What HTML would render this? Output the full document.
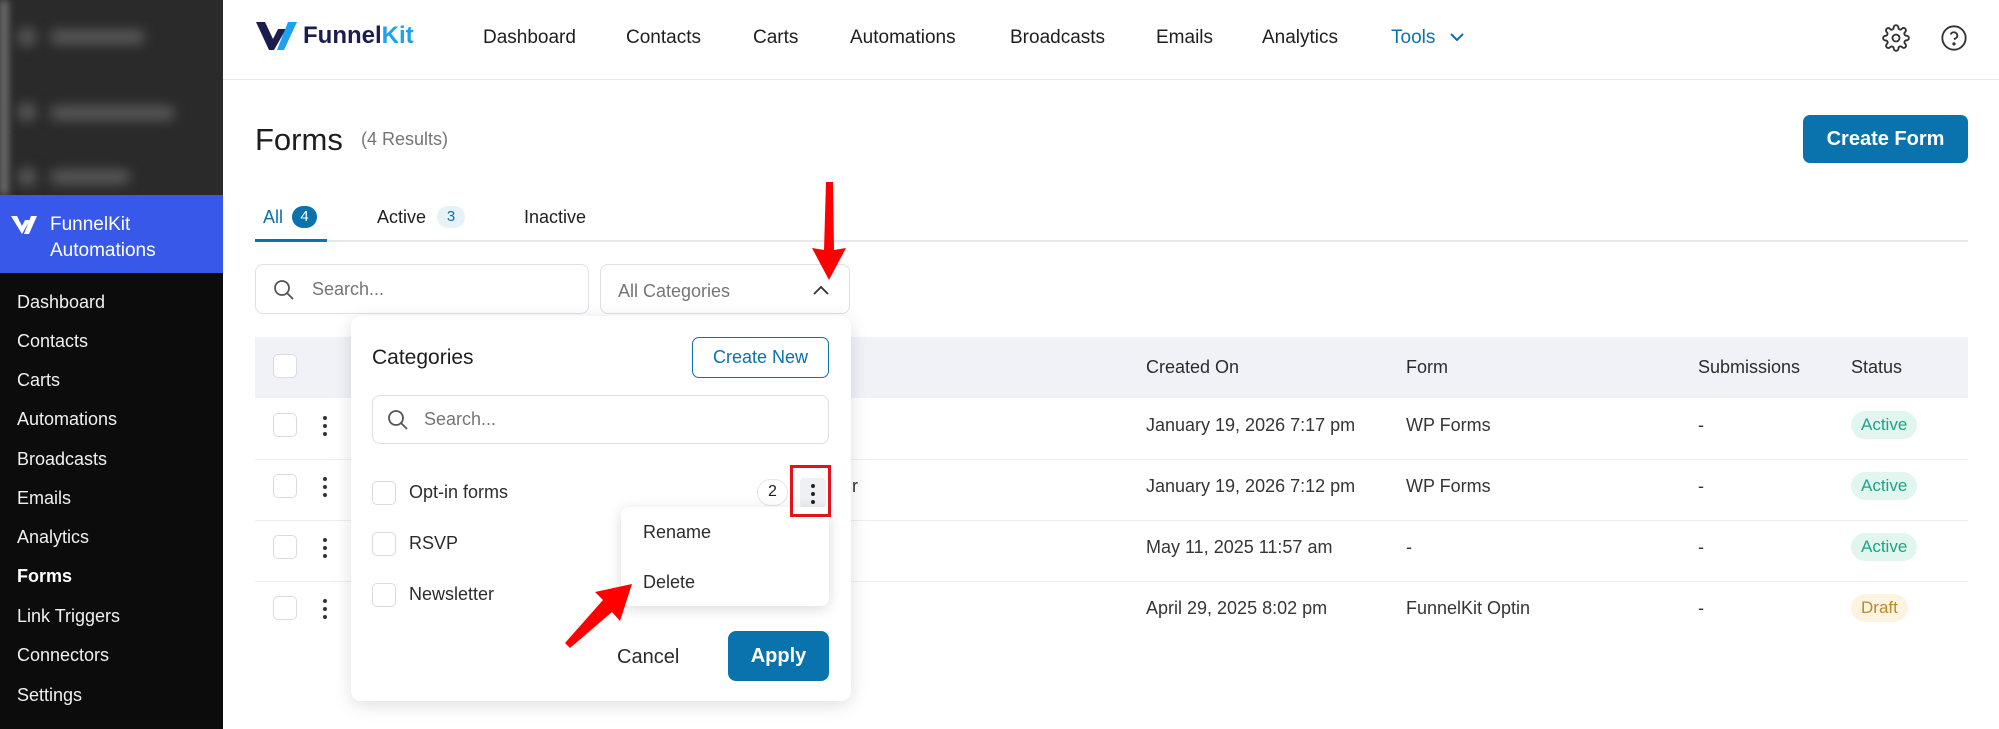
<!DOCTYPE html>
<html><head><meta charset="utf-8"><style>
*{box-sizing:border-box;margin:0;padding:0}
body{width:1999px;height:729px;overflow:hidden;background:#fff;font-family:"Liberation Sans",sans-serif;color:#1e1e1e;position:relative}
.a{position:absolute;white-space:nowrap}
#side{position:absolute;left:0;top:0;width:223px;height:729px;background:#1d2327}
.blur{position:absolute;background:#5a5a5a;filter:blur(6px);border-radius:8px}
.sm{position:absolute;left:17px;font-size:18px;color:#f0f0f1}
.nav{font-size:19px;color:#1e1e1e;top:27px}
.th{font-size:18px;color:#2c2c2c;top:357px}
.td{font-size:18px;color:#353535}
.cb{position:absolute;width:24px;height:24px;border:1.5px solid #d8dbe6;border-radius:5px;background:#fff}
.keb{position:absolute;width:4px;height:20px}
.keb i{display:block;width:4px;height:4px;border-radius:2px;background:#333;margin-bottom:4px}
.badge{position:absolute;height:28px;border-radius:14px;font-size:17px;line-height:28px;padding:0 10px}
.act{background:#e2f6f0;color:#1ea386}
.row{position:absolute;left:255px;width:1713px;height:1px;background:#eceef4}
</style></head><body>
<div id="side">
 <div style="position:absolute;left:0;top:0;width:223px;height:195px;background:#2a2a2a;overflow:hidden">
  <div style="position:absolute;left:0;top:0;width:8px;height:195px;background:#777;filter:blur(4px)"></div>
  <div class="blur" style="left:18px;top:28px;width:18px;height:18px"></div>
  <div class="blur" style="left:50px;top:30px;width:95px;height:14px"></div>
  <div class="blur" style="left:18px;top:103px;width:18px;height:18px"></div>
  <div class="blur" style="left:50px;top:106px;width:125px;height:14px"></div>
  <div class="blur" style="left:18px;top:168px;width:18px;height:18px"></div>
  <div class="blur" style="left:50px;top:170px;width:80px;height:14px"></div>
 </div>
 <div style="position:absolute;left:0;top:195px;width:223px;height:78px;background:#3858e9"></div>
 <svg class="a" style="left:10px;top:214px" width="30" height="20" viewBox="0 0 30 20"><path d="M1 2h6l5 10 3-6h5l-8 14z" fill="#fff"/><path d="M21 2h6l-8 18h-5z" fill="#fff"/></svg>
 <div class="a" style="left:50px;top:212px;font-size:19px;color:#fff;line-height:26px">FunnelKit<br>Automations</div>
 <div style="position:absolute;left:0;top:273px;width:223px;height:456px;background:#0c0c0c"></div>
 <div class="sm" style="top:292px">Dashboard</div>
 <div class="sm" style="top:331px">Contacts</div>
 <div class="sm" style="top:370px">Carts</div>
 <div class="sm" style="top:409px">Automations</div>
 <div class="sm" style="top:449px">Broadcasts</div>
 <div class="sm" style="top:488px">Emails</div>
 <div class="sm" style="top:527px">Analytics</div>
 <div class="sm" style="top:566px;font-weight:bold;color:#fff">Forms</div>
 <div class="sm" style="top:606px">Link Triggers</div>
 <div class="sm" style="top:645px">Connectors</div>
 <div class="sm" style="top:685px">Settings</div>
</div>
<div class="a" style="left:223px;top:79px;width:1776px;height:1px;background:#e6e8ee"></div>
<svg class="a" style="left:256px;top:22px" width="44" height="30" viewBox="0 0 44 30"><path d="M0 0h9l8 17 5-10h8L18 28h-5z" fill="#1b1d4e"/><path d="M32 0h9L28 28h-7z" fill="#1ba3f0"/></svg>
<div class="a" style="left:303px;top:22px;font-size:24px;font-weight:bold;color:#1b1d4e">Funnel<span style="color:#1ba3f0">Kit</span></div>
<div class="a nav" style="left:483px">Dashboard</div>
<div class="a nav" style="left:626px">Contacts</div>
<div class="a nav" style="left:753px">Carts</div>
<div class="a nav" style="left:850px">Automations</div>
<div class="a nav" style="left:1010px">Broadcasts</div>
<div class="a nav" style="left:1156px">Emails</div>
<div class="a nav" style="left:1262px">Analytics</div>
<div class="a nav" style="left:1391px;color:#0a72ad">Tools</div>
<svg class="a" style="left:1450px;top:32px" width="14" height="10" viewBox="0 0 14 10"><path d="M1 2l6 6 6-6" stroke="#0a72ad" stroke-width="2" fill="none"/></svg>
<svg class="a" style="left:1882px;top:24px" width="28" height="28" viewBox="0 0 24 24" fill="none" stroke="#333" stroke-width="1.6"><circle cx="12" cy="12" r="3"/><path d="M19.4 15a1.7 1.7 0 0 0 .3 1.8l.1.1a2 2 0 1 1-2.8 2.8l-.1-.1a1.7 1.7 0 0 0-1.8-.3 1.7 1.7 0 0 0-1 1.5V21a2 2 0 1 1-4 0v-.1a1.7 1.7 0 0 0-1.1-1.5 1.7 1.7 0 0 0-1.8.3l-.1.1a2 2 0 1 1-2.8-2.8l.1-.1a1.7 1.7 0 0 0 .3-1.8 1.7 1.7 0 0 0-1.5-1H3a2 2 0 1 1 0-4h.1a1.7 1.7 0 0 0 1.5-1.1 1.7 1.7 0 0 0-.3-1.8l-.1-.1a2 2 0 1 1 2.8-2.8l.1.1a1.7 1.7 0 0 0 1.8.3H9a1.7 1.7 0 0 0 1-1.5V3a2 2 0 1 1 4 0v.1a1.7 1.7 0 0 0 1 1.5 1.7 1.7 0 0 0 1.8-.3l.1-.1a2 2 0 1 1 2.8 2.8l-.1.1a1.7 1.7 0 0 0-.3 1.8V9a1.7 1.7 0 0 0 1.5 1H21a2 2 0 1 1 0 4h-.1a1.7 1.7 0 0 0-1.5 1z"/></svg>
<svg class="a" style="left:1940px;top:24px" width="28" height="28" viewBox="0 0 24 24" fill="none" stroke="#333" stroke-width="1.6"><circle cx="12" cy="12" r="10"/><path d="M9.1 9a3 3 0 0 1 5.8 1c0 2-3 3-3 3"/><circle cx="12" cy="17" r=".6" fill="#333"/></svg>
<div class="a" style="left:255px;top:122px;font-size:31px;color:#1e1e1e">Forms</div>
<div class="a" style="left:361px;top:129px;font-size:18px;color:#757575">(4 Results)</div>
<div class="a" style="left:1803px;top:115px;width:165px;height:48px;background:#0a72ad;border-radius:7px;color:#fff;font-size:20px;font-weight:bold;text-align:center;line-height:48px">Create Form</div>
<div class="a" style="left:263px;top:207px;font-size:18px;color:#0a72ad">All</div>
<div class="a" style="left:292px;top:206px;width:25px;height:22px;border-radius:11px;background:#0a72ad;color:#fff;font-size:15px;text-align:center;line-height:22px">4</div>
<div class="a" style="left:377px;top:207px;font-size:18px;color:#1e1e1e">Active</div>
<div class="a" style="left:437px;top:206px;width:28px;height:22px;border-radius:11px;background:#e6f1f8;color:#0a72ad;font-size:15px;text-align:center;line-height:22px">3</div>
<div class="a" style="left:524px;top:207px;font-size:18px;color:#1e1e1e">Inactive</div>
<div class="a" style="left:255px;top:240px;width:1713px;height:2px;background:#e6e8ee"></div>
<div class="a" style="left:255px;top:239px;width:72px;height:3px;background:#0a72ad"></div>
<div class="a" style="left:255px;top:264px;width:334px;height:50px;border:1.5px solid #dde0e8;border-radius:8px"></div>
<svg class="a" style="left:272px;top:278px" width="24" height="24" viewBox="0 0 24 24" fill="none" stroke="#555" stroke-width="1.8"><circle cx="10" cy="10" r="7"/><path d="M15 15l6 6"/></svg>
<div class="a" style="left:312px;top:279px;font-size:18px;color:#757575">Search...</div>
<div class="a" style="left:600px;top:264px;width:250px;height:50px;border:1.5px solid #dde0e8;border-radius:8px"></div>
<div class="a" style="left:618px;top:281px;font-size:18px;color:#757575">All Categories</div>
<svg class="a" style="left:812px;top:284px" width="18" height="12" viewBox="0 0 18 12"><path d="M2 10l7-7 7 7" stroke="#333" stroke-width="1.8" fill="none"/></svg>
<div class="a" style="left:255px;top:337px;width:1713px;height:61px;background:#f0f2f8"></div>
<div class="cb" style="left:273px;top:354px"></div>
<div class="a th" style="left:1146px">Created On</div>
<div class="a th" style="left:1406px">Form</div>
<div class="a th" style="left:1698px">Submissions</div>
<div class="a th" style="left:1851px">Status</div>
<div class="row" style="top:459px"></div><div class="row" style="top:520px"></div><div class="row" style="top:581px"></div>
<div class="cb" style="left:273px;top:413px"></div><div class="cb" style="left:273px;top:474px"></div><div class="cb" style="left:273px;top:535px"></div><div class="cb" style="left:273px;top:596px"></div>
<div class="keb" style="left:323px;top:416px"><i></i><i></i><i></i></div>
<div class="keb" style="left:323px;top:477px"><i></i><i></i><i></i></div>
<div class="keb" style="left:323px;top:538px"><i></i><i></i><i></i></div>
<div class="keb" style="left:323px;top:599px"><i></i><i></i><i></i></div>
<div class="a td" style="left:1146px;top:415px">January 19, 2026 7:17 pm</div>
<div class="a td" style="left:1146px;top:476px">January 19, 2026 7:12 pm</div>
<div class="a td" style="left:1146px;top:537px">May 11, 2025 11:57 am</div>
<div class="a td" style="left:1146px;top:598px">April 29, 2025 8:02 pm</div>
<div class="a td" style="left:1406px;top:415px">WP Forms</div>
<div class="a td" style="left:1406px;top:476px">WP Forms</div>
<div class="a td" style="left:1406px;top:537px">-</div>
<div class="a td" style="left:1406px;top:598px">FunnelKit Optin</div>
<div class="a td" style="left:1698px;top:415px">-</div><div class="a td" style="left:1698px;top:476px">-</div><div class="a td" style="left:1698px;top:537px">-</div><div class="a td" style="left:1698px;top:598px">-</div>
<div class="badge act" style="left:1851px;top:411px">Active</div>
<div class="badge act" style="left:1851px;top:472px">Active</div>
<div class="badge act" style="left:1851px;top:533px">Active</div>
<div class="badge" style="left:1851px;top:594px;background:#fcf3e0;color:#b88a2e">Draft</div>
<div class="a td" style="left:852px;top:476px">r</div>
<div class="a td" style="left:817px;top:537px">ms</div>
<div class="a td" style="left:817px;top:598px">ms</div>
<div class="a" style="left:351px;top:316px;width:500px;height:385px;background:#fff;border-radius:10px;box-shadow:0 4px 18px rgba(0,0,0,.13)"></div>
<div class="a" style="left:372px;top:346px;font-size:21px;color:#1e1e1e">Categories</div>
<div class="a" style="left:692px;top:337px;width:137px;height:41px;border:1.5px solid #0a72ad;border-radius:7px;color:#0a72ad;font-size:18px;text-align:center;line-height:38px">Create New</div>
<div class="a" style="left:372px;top:395px;width:457px;height:49px;border:1.5px solid #dde0e8;border-radius:8px"></div>
<svg class="a" style="left:386px;top:408px" width="24" height="24" viewBox="0 0 24 24" fill="none" stroke="#555" stroke-width="1.8"><circle cx="10" cy="10" r="7"/><path d="M15 15l6 6"/></svg>
<div class="a" style="left:424px;top:409px;font-size:18px;color:#757575">Search...</div>
<div class="cb" style="left:372px;top:481px"></div><div class="cb" style="left:372px;top:532px"></div><div class="cb" style="left:372px;top:583px"></div>
<div class="a td" style="left:409px;top:482px;color:#2c2c2c">Opt-in forms</div>
<div class="a td" style="left:409px;top:533px;color:#2c2c2c">RSVP</div>
<div class="a td" style="left:409px;top:584px;color:#2c2c2c">Newsletter</div>
<div class="a" style="left:757px;top:479px;width:31px;height:27px;border:1.5px solid #e3e5ec;border-radius:14px;font-size:16px;text-align:center;line-height:24px">2</div>
<div class="a" style="left:800px;top:478px;width:26px;height:30px;background:#eef0f4;border-radius:4px"></div>
<div class="keb" style="left:811px;top:484px"><i style="background:#222"></i><i style="background:#222"></i><i style="background:#222"></i></div>
<div class="a" style="left:621px;top:507px;width:208px;height:99px;background:#fff;border-radius:8px;box-shadow:0 3px 14px rgba(0,0,0,.14)"></div>
<div class="a" style="left:790px;top:465px;width:41px;height:52px;border:3px solid #e0141a"></div>
<div class="a td" style="left:643px;top:522px;color:#2c2c2c">Rename</div>
<div class="a td" style="left:643px;top:572px;color:#2c2c2c">Delete</div>
<div class="a" style="left:617px;top:646px;font-size:20px;color:#2c2c2c">Cancel</div>
<div class="a" style="left:728px;top:631px;width:101px;height:50px;background:#0a72ad;border-radius:8px;color:#fff;font-size:20px;font-weight:bold;text-align:center;line-height:50px">Apply</div>
<svg class="a" style="left:0;top:0" width="1999" height="729" viewBox="0 0 1999 729">
<path d="M826 182 L833 182 L834 250 L846 248 L829 280 L812 248 L824 250 Z" fill="#f00"/>
<path d="M565 643 L603 600 L595 592 L632 584 L620 621 L612 612 L570 648 Z" fill="#f00"/>
</svg>
</body></html>
